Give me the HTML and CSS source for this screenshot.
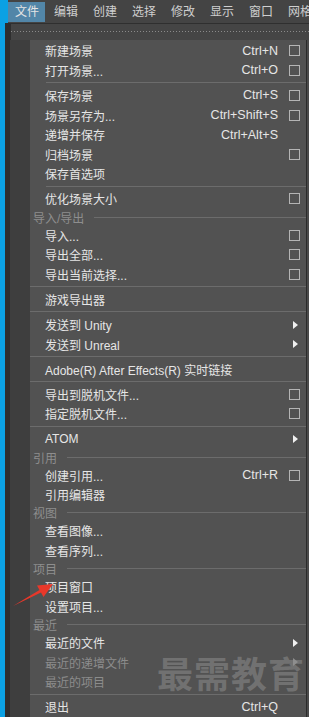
FILE: index.html
```html
<!DOCTYPE html>
<html lang="zh-CN">
<head>
    <meta charset="UTF-8">
    <meta name="viewport" content="width=device-width, initial-scale=1.0">
    <title>文件菜单</title>
    <link rel="stylesheet" href="styles.css">
</head>
<body>
    <div class="app">
        <!-- 菜单栏 -->
        <div class="menubar">
            <span class="top-item active">文件</span>
            <span class="top-item">编辑</span>
            <span class="top-item">创建</span>
            <span class="top-item">选择</span>
            <span class="top-item">修改</span>
            <span class="top-item">显示</span>
            <span class="top-item">窗口</span>
            <span class="top-item">网格</span>
        </div>

        <div class="shelf"><div class="dots"></div></div>

        <div class="workspace">
            <div class="side"></div>

            <!-- 文件菜单 -->
            <div class="menu">
                <div class="item"><span>新建场景</span><span class="key">Ctrl+N</span><span class="box"></span></div>
                <div class="item"><span>打开场景...</span><span class="key">Ctrl+O</span><span class="box"></span></div>
                <div class="sep indent"></div>
                <div class="item"><span>保存场景</span><span class="key">Ctrl+S</span><span class="box"></span></div>
                <div class="item"><span>场景另存为...</span><span class="key">Ctrl+Shift+S</span><span class="box"></span></div>
                <div class="item"><span>递增并保存</span><span class="key">Ctrl+Alt+S</span><span></span></div>
                <div class="item"><span>归档场景</span><span class="key"></span><span class="box"></span></div>
                <div class="item"><span>保存首选项</span><span class="key"></span><span></span></div>
                <div class="sep indent"></div>
                <div class="item"><span>优化场景大小</span><span class="key"></span><span class="box"></span></div>
                <div class="head">导入/导出</div>
                <div class="item"><span>导入...</span><span class="key"></span><span class="box"></span></div>
                <div class="item"><span>导出全部...</span><span class="key"></span><span class="box"></span></div>
                <div class="item"><span>导出当前选择...</span><span class="key"></span><span class="box"></span></div>
                <div class="sep"></div>
                <div class="item"><span>游戏导出器</span><span class="key"></span><span></span></div>
                <div class="sep"></div>
                <div class="item"><span>发送到 Unity</span><span class="key"></span><span class="arrow"></span></div>
                <div class="item"><span>发送到 Unreal</span><span class="key"></span><span class="arrow"></span></div>
                <div class="sep"></div>
                <div class="item"><span>Adobe(R) After Effects(R) 实时链接</span><span class="key"></span><span></span></div>
                <div class="sep"></div>
                <div class="item"><span>导出到脱机文件...</span><span class="key"></span><span class="box"></span></div>
                <div class="item"><span>指定脱机文件...</span><span class="key"></span><span class="box"></span></div>
                <div class="sep"></div>
                <div class="item"><span>ATOM</span><span class="key"></span><span class="arrow"></span></div>
                <div class="head">引用</div>
                <div class="item"><span>创建引用...</span><span class="key">Ctrl+R</span><span class="box"></span></div>
                <div class="item"><span>引用编辑器</span><span class="key"></span><span></span></div>
                <div class="head">视图</div>
                <div class="item"><span>查看图像...</span><span class="key"></span><span></span></div>
                <div class="item"><span>查看序列...</span><span class="key"></span><span></span></div>
                <div class="head">项目</div>
                <div class="item"><span>项目窗口</span><span class="key"></span><span></span></div>
                <div class="item"><span>设置项目...</span><span class="key"></span><span></span></div>
                <div class="head">最近</div>
                <div class="item"><span>最近的文件</span><span class="key"></span><span class="arrow"></span></div>
                <div class="item disabled"><span>最近的递增文件</span><span class="key"></span><span class="arrow"></span></div>
                <div class="item disabled"><span>最近的项目</span><span class="key"></span><span></span></div>
                <div class="sep"></div>
                <div class="item"><span>退出</span><span class="key">Ctrl+Q</span><span></span></div>
            </div>

            <div class="edge"></div>
        </div>

        <!-- 标注箭头 -->
        <svg class="pointer" width="46" height="30" viewBox="0 0 46 30">
            <polygon points="3,26 31,12.5 33.5,17 43,4 27,5.5 29.5,10" fill="#e8382a"/>
        </svg>

        <div class="watermark">最需教育</div>
    </div>
</body>
</html>
```

FILE: styles.css
```css
* { box-sizing: border-box; }
body { margin: 0; background-color: #444; font-family: "Liberation Sans", "Noto Sans CJK SC", sans-serif; font-size: 12px; }
.app { position: relative; width: 309px; height: 717px; overflow: hidden; border-left: 5px solid #0ba1e4; background-color: #2e2e2e; display: flex; flex-direction: column; }

.menubar { height: 23px; flex-shrink: 0; display: flex; align-items: center; overflow: hidden; padding-left: 3px; background-color: #444; box-shadow: inset 3px 0 0 #0ba1e4; color: #cfcfcf; font-size: 12px; }
.top-item { flex-shrink: 0; white-space: nowrap; height: 20px; line-height: 20px; padding: 0 6px 0 7px; margin-right: 2px; }
.top-item.active { background-color: #5286a8; color: #e4e4e4; }

.shelf { height: 17px; flex-shrink: 0; margin-left: 5px; background-color: #454545; border-top: 1px solid #2f2f2f; border-left: 1px solid #2f2f2f; padding-top: 7px; }
.dots { height: 1px; background-image: linear-gradient(90deg, #8a8a8a 1px, transparent 1px); background-size: 3px 1px; }

.workspace { flex: 1; display: flex; }
.side { width: 25px; border-left: 5px solid #2e2e2e; background-color: #3e3e3e; }
.menu { width: 276px; background-color: #525252; padding-top: 1px; color: #e6e6e6; border-bottom: 1px solid #333; }
.edge { flex: 1; border-left: 1px solid #2b2b2b; background-color: #4a4a4a; }

.item { height: 19.6px; display: grid; grid-template-columns: 1fr auto 11px; column-gap: 11px; align-items: center; padding: 0 6px 0 15px; white-space: nowrap; }
.item.disabled { color: #8c8c8c; }
.key { text-align: right; font-size: 12.5px; }
.box { width: 11px; height: 11px; border: 1px solid #b4b4b4; }
.arrow { width: 0; height: 0; margin-left: 4px; border-top: 4px solid transparent; border-bottom: 4px solid transparent; border-left: 5px solid #f0f0f0; }
.disabled .arrow { border-left-color: #8c8c8c; }

.sep { height: 1px; margin: 2px 0 2.5px; background-color: #6c6c6c; }
.sep.indent { margin-left: 16px; }
.head { height: 16.6px; display: flex; align-items: center; padding-left: 3px; color: #8e8e8e; }
.head::after { content: ""; flex: 1; height: 1px; margin-left: 10px; background-color: #6c6c6c; }

.pointer { position: absolute; left: 5px; top: 580px; }
.watermark { position: absolute; left: 152px; top: 654px; font-family: "Noto Sans CJK SC", sans-serif; font-weight: 700; font-size: 36px; line-height: 1; color: rgba(145, 145, 145, 0.5); letter-spacing: 1px; }
```
